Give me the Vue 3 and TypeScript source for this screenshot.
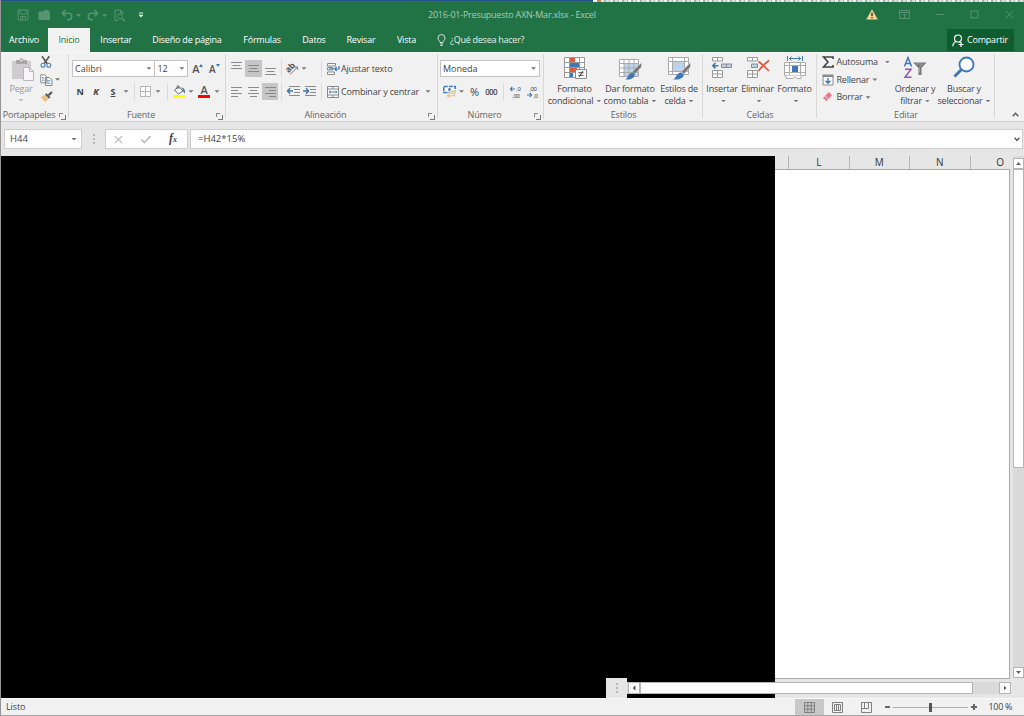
<script setup lang="ts">
interface Tab { label: string; cls: string }
const tabs: Tab[] = [
  { label: 'Archivo', cls: 'archivo' },
  { label: 'Inicio', cls: 'inicio active' },
  { label: 'Insertar', cls: 'insertar' },
  { label: 'Diseño de página', cls: 'diseno' },
  { label: 'Fórmulas', cls: 'formulas' },
  { label: 'Datos', cls: 'datos' },
  { label: 'Revisar', cls: 'revisar' },
  { label: 'Vista', cls: 'vista' },
]
const columns: string[] = ['L', 'M', 'N']
</script>

<template>
  <div class="window">
    <div class="desktop"><i class="d1"></i><i class="d2"></i></div>
    <header class="titlebar">
      <div class="quick">
        <svg class="q-save" width="12" height="12" viewBox="0 0 12 12"><path d="M1 1h10v10H1zM3 1v4h6V1M3.500 11V7.500h5V11M5.500 8v3" /></svg>
        <svg class="q-open" width="13" height="12" viewBox="0 0 13 12"><path class="solid" d="M.5 2.500h5l1-1.500h4v1.500H12V11H.5z" /></svg>
        <svg class="q-undo" width="12" height="12" viewBox="0 0 12 12"><path class="thick" d="M4.500 1 1.300 4.200l3.200 3.200M2 4.200h5.500a3.200 3.200 0 0 1 0 6.400H6" /></svg>
        <svg class="q-arr" width="5" height="3" viewBox="0 0 5 3"><path class="solid" d="M0 0h5L2.500 3z" /></svg>
        <svg class="q-redo" width="12" height="12" viewBox="0 0 12 12"><path class="thick" d="M7.500 1l3.200 3.200-3.200 3.200M10 4.200H4.500a3.200 3.200 0 0 0 0 6.400H6" /></svg>
        <svg class="q-arr" width="5" height="3" viewBox="0 0 5 3"><path class="solid" d="M0 0h5L2.500 3z" /></svg>
        <svg class="q-prev" width="12" height="13" viewBox="0 0 12 13"><path d="M4 11.500H1V1h5.500L9 3.500V5M6.500 1v3H9" /><circle cx="6" cy="7.500" r="2.500" /><path class="thick" d="M8 9.500l3 2.800" /></svg>
        <svg class="q-more" width="6" height="6" viewBox="0 0 6 6"><path d="M1 .5h4v1H1zM.5 2.800h5L3 5.400z" /></svg>
      </div>
      <div class="title">2016-01-Presupuesto AXN-Mar.xlsx - Excel</div>
      <div class="winbtns">
        <svg width="12" height="11" viewBox="0 0 12 11"><path d="M6 .3 11.800 10.500H.2z" fill="#f7cf8c" /><path d="M6 3.500v3.500M6 8v1.300" stroke="#3c4650" stroke-width="1.500" /></svg>
        <svg class="w-opt" width="11" height="9" viewBox="0 0 11 9"><path d="M.5.500h10v8H.5zM.5 2.500h10M5.500 8V4M3.800 5.500l1.700-1.700 1.700 1.700" /></svg>
        <svg class="w-min" width="9" height="9" viewBox="0 0 9 9"><path d="M1 4.500h8" /></svg>
        <svg class="w-max" width="9" height="9" viewBox="0 0 9 9"><path d="M1 1h7v7H1z" /></svg>
        <svg class="w-close" width="9" height="9" viewBox="0 0 9 9"><path d="M.7.700l7.600 7.600M8.300.700.700 8.300" /></svg>
      </div>
    </header>

    <nav class="tabs">
      <div v-for="t in tabs" :key="t.label" class="tab" :class="t.cls">{{ t.label }}</div>
      <svg class="bulb" width="9" height="12" viewBox="0 0 9 12"><path d="M3 8.500C3 7 1 6.300 1 4a3.500 3.500 0 0 1 7 0c0 2.300-2 3-2 4.500zM3 10h3M3.500 11.500h2" fill="none" stroke="#e2eee7" stroke-width=".9" /></svg>
      <div class="tell">¿Qué desea hacer?</div>
      <div class="share">
        <svg width="12" height="13" viewBox="0 0 12 13"><circle cx="6" cy="4.500" r="3.500" fill="none" stroke="#fff" stroke-width="1.200" /><path d="M.8 12.300c.2-2.600 1.600-4.300 3.600-4.800M7 7.500l1.300 1M9 8v5M6.500 10.500h5" fill="none" stroke="#fff" stroke-width="1.200" /></svg>
        <span>Compartir</span>
      </div>
    </nav>

    <section class="ribbon">
      <!-- Portapapeles -->
      <div class="group g-clip">
        <div class="body">
          <div class="paste">
            <svg width="24" height="24" viewBox="0 0 24 24"><path d="M1 4h19v18H1z" fill="#cfcccf" /><path d="M5 3h3.500a2 2 0 0 1 4 0H16v4H5z" fill="#aaa6aa" /><circle cx="10.500" cy="3.200" r="1" fill="#eee" /><path d="M12.500 10.500h6l4 4v9h-10z" fill="#f7f5f8" stroke="#bbb6bc" /><path d="M18.500 10.500v4h4" fill="none" stroke="#bbb6bc" /></svg>
            <span class="dim">Pegar</span>
            <b class="arr faint"></b>
          </div>
          <div class="clipcol">
            <svg width="12" height="12" viewBox="0 0 12 12"><path d="M2 .3l5.300 7.400M9.300.3 4 7.700" stroke="#555" stroke-width="1.600" /><circle cx="3" cy="9.300" r="2" fill="none" stroke="#4a82ba" stroke-width="1.100" /><circle cx="8.800" cy="9.300" r="2" fill="none" stroke="#4a82ba" stroke-width="1.100" /></svg>
            <div class="copy"><svg width="13" height="12" viewBox="0 0 13 12"><path d="M.8.800h4l2 2v6h-6zM5.500 3.500h4l2.500 2.500v5.500H5.500z" fill="#fff" stroke="#888" /><path d="M2 3.500h2.500M2 5h2.500M2 6.500h2.500M7 6.500h3.500M7 8h3.500M7 9.500h3.500" stroke="#6a9acb" stroke-width=".8" /></svg><b class="arr"></b></div>
            <svg width="13" height="12" viewBox="0 0 13 12"><path d="M.8 6 5 3.800l3.300 4L5 11.300z" fill="#edc181" /><path d="M5 3.500l1.500-1.200 4 4-1.500 1.500z" fill="#555" /><path d="M8.500 4.200 12 1" stroke="#555" stroke-width="2.200" /></svg>
          </div>
        </div>
        <footer><span>Portapapeles</span><i class="launch"></i></footer>
      </div>

      <!-- Fuente -->
      <div class="group g-font">
        <div class="body rows">
          <div class="row">
            <div class="combo c-font"><span>Calibri</span><b class="arr"></b></div>
            <div class="combo c-size"><span>12</span><b class="arr"></b></div>
            <div class="grow">A<svg width="4" height="3" viewBox="0 0 4 3"><path d="M0 3h4L2 0z" fill="#3f78b5" /></svg></div>
            <div class="grow shrink">A<svg width="4" height="3" viewBox="0 0 4 3"><path d="M0 0h4L2 3z" fill="#3f78b5" /></svg></div>
          </div>
          <div class="row r2">
            <div class="x w16 bold">N</div><div class="x w16 bold ital">K</div><div class="x w18 bold under">S</div><div class="x w8"><b class="arr"></b></div><div class="x w8"><i class="sep"></i></div>
            <div class="x w15"><svg width="11" height="11" viewBox="0 0 11 11"><path d="M.5.500h10v10H.5zM5.500.500v10M.5 5.500h10" fill="#fff" stroke="#b5b5b5" /></svg></div>
            <div class="x w10"><b class="arr"></b></div><div class="x w8"><i class="sep"></i></div>
            <div class="x w16"><svg width="13" height="13" viewBox="0 0 13 13"><path d="M1.500 5 6 1.500l4 4.500-4.500 3z" fill="#fff" stroke="#666" /><path d="M4 4V1.500Q5-.3 6 1.500V4" fill="none" stroke="#666" /><path d="M8.500 2.500q4 .5 3.500 6-2-1-2-3.500z" fill="#3f78b5" /><path d="M0 10h12.500v3H0z" fill="#ffff00" /></svg></div>
            <div class="x w8"><b class="arr"></b></div>
            <div class="x w18 fontcolor"><span>A</span><i></i></div>
            <div class="x w8"><b class="arr"></b></div>
          </div>
        </div>
        <footer><span>Fuente</span><i class="launch"></i></footer>
      </div>

      <!-- Alineación -->
      <div class="group g-align">
        <div class="body rows">
          <div class="row">
            <div class="x w17"><svg width="11" height="15" viewBox="0 0 11 15"><path d="M0 1.500h11M1.500 4.500h8M0 7.500h11" class="ln" /></svg></div>
            <div class="x w17 on"><svg width="11" height="15" viewBox="0 0 11 15"><path d="M0 4.500h11M1.500 7.500h8M0 10.500h11" class="ln" /></svg></div>
            <div class="x w16"><svg width="11" height="15" viewBox="0 0 11 15"><path d="M0 7.500h11M1.500 10.500h8M0 13.500h11" class="ln" /></svg></div>
            <div class="x w7"><i class="sep"></i></div>
            <div class="x w15"><svg width="13" height="12" viewBox="0 0 13 12"><text x="0" y="8" transform="rotate(-45 4 6)" font-size="8.500" font-weight="700" fill="#555">ab</text><path d="M4 11.500 11.500 4M9 4h2.700v2.700" fill="none" stroke="#777" /></svg></div>
            <div class="x w8"><b class="arr"></b></div><div class="x w10"></div><div class="x w7"><i class="sep"></i></div>
            <div class="x w16"><svg width="13" height="12" viewBox="0 0 13 12"><path d="M.5.500h8v2.500h-8zM.5 4.500h5v2.500h-5zM.5 9h7v2.500h-7z" fill="#fff" stroke="#888" /><path d="M2 5.800h5" stroke="#3f78b5" /><path d="M12 3v3H8M9.700 4 7.800 6l1.900 2" fill="none" stroke="#3f78b5" stroke-width="1.200" /></svg></div>
            <span class="lbl l-wrap">Ajustar texto</span>
          </div>
          <div class="row r2">
            <div class="x w17"><svg width="11" height="11" viewBox="0 0 11 11"><path d="M0 1.500h11M0 4.500h7M0 7.500h11M0 10.500h7" class="ln" /></svg></div>
            <div class="x w17"><svg width="11" height="11" viewBox="0 0 11 11"><path d="M0 1.500h11M2 4.500h7M0 7.500h11M2 10.500h7" class="ln" /></svg></div>
            <div class="x w16 on"><svg width="11" height="11" viewBox="0 0 11 11"><path d="M0 1.500h11M4 4.500h7M0 7.500h11M4 10.500h7" class="ln" /></svg></div>
            <div class="x w7"><i class="sep"></i></div>
            <div class="x w16"><svg width="13" height="11" viewBox="0 0 13 11"><path d="M2 .500h11M7 3.500h6M7 6.500h6M2 9.500h11" class="ln" /><path d="M0 5h6M3 2.200.5 5 3 7.800" fill="none" stroke="#3f78b5" stroke-width="1.500" /></svg></div>
            <div class="x w17"><svg width="13" height="11" viewBox="0 0 13 11"><path d="M2 .500h11M7 3.500h6M7 6.500h6M2 9.500h11" class="ln" /><path d="M0 5h6M3 2.200 5.500 5 3 7.800" fill="none" stroke="#3f78b5" stroke-width="1.500" /></svg></div>
            <div class="x w7"><i class="sep"></i></div>
            <div class="x w16"><svg width="12" height="12" viewBox="0 0 12 12"><path d="M.5.500h11v11H.5zM.5 3h11M.5 9h11M6 .500V3M6 9v2.500" fill="#fff" stroke="#888" /><path d="M2 6h8M3.500 4.700 2.200 6l1.300 1.300M8.500 4.700 9.800 6 8.500 7.300" fill="none" stroke="#3f78b5" /></svg></div>
            <span class="lbl l-merge">Combinar y centrar</span><div class="x w10"><b class="arr"></b></div>
          </div>
        </div>
        <footer><span>Alineación</span><i class="launch"></i></footer>
      </div>

      <!-- Número -->
      <div class="group g-num">
        <div class="body rows">
          <div class="row"><div class="combo c-num"><span>Moneda</span><b class="arr"></b></div></div>
          <div class="row r2">
            <div class="x w18"><svg width="13" height="13" viewBox="0 0 13 13"><path d="M.8 1.500h11.400v6H.8z" fill="#fff" stroke="#3f78b5" stroke-width="1.500" stroke-dasharray="4 1" /><circle cx="6.500" cy="4.500" r="1.500" fill="#3f78b5" /><path d="M7 5.500h5.500v6H7zM4 9h5v3.500H4z" fill="#edc181" stroke="#f1f1f1" stroke-width=".6" /><path d="M7 7.500h5M7 9.500h5" stroke="#f1f1f1" stroke-width=".7" /></svg></div>
            <div class="x w7"><b class="arr"></b></div>
            <div class="x w19 pct">%</div><div class="x w14 mil">000</div><div class="x w10"><i class="sep"></i></div>
            <div class="x w16"><svg width="12" height="12" viewBox="0 0 12 12"><text x="6" y="4.600" class="dec">,0</text><text x="2" y="11.800" class="dec">,00</text><path d="M0 3h5M2.300.800.500 3l1.800 2.200" fill="none" stroke="#3f78b5" stroke-width="1.200" /></svg></div>
            <div class="x w17"><svg width="12" height="12" viewBox="0 0 12 12"><text x="2" y="4.600" class="dec">,00</text><text x="6" y="11.800" class="dec">,0</text><path d="M0 9h5M2.700 6.800 4.500 9l-1.800 2.200" fill="none" stroke="#3f78b5" stroke-width="1.200" /></svg></div>
          </div>
        </div>
        <footer><span>Número</span><i class="launch"></i></footer>
      </div>

      <!-- Estilos -->
      <div class="group g-style">
        <div class="body bigs">
          <div class="big b-cond">
            <svg width="24" height="24" viewBox="0 0 24 24"><path d="M1.500 1.500h20v20h-20zM1.500 6.500h20M1.500 11.500h20M1.500 16.500h20M6.500 1.500v20M16.500 1.500v20" fill="#fff" stroke="#999" /><path d="M7 2h5v4H7zM7 12h7v4H7z" fill="#dc5b3c" /><path d="M7 7h9v4H7zM7 17h3v4H7z" fill="#3f78b5" /><path d="M12.500 13.500h11v9h-11z" fill="#fff" stroke="#888" /><path d="M15.500 16.700h5M15.500 19.300h5M20 15l-4 6" stroke="#444" /></svg>
            <span>Formato</span><span>condicional<b class="arr"></b></span>
          </div>
          <div class="big b-table">
            <svg width="24" height="24" viewBox="0 0 24 24"><path d="M1.500 3.500h19v17h-19z" fill="#fff" stroke="#aaa" /><path d="M6 8h14v12H6z" fill="#bdd3eb" /><path d="M1.500 7.500h19M1.500 12h19M1.500 16.500h19M6 3.500v17M11 3.500v17M16 3.500v17" stroke="#aaa" fill="none" /><path d="M14 16 20.500 9.500 23.500 6.500v4.500L17 18z" fill="#777" stroke="#f1f1f1" stroke-width=".5" /><path d="M7 23.500c3-1 3-5.500 7-7 2 0 3 1.500 2.500 3.500-1.500 3-5.500 4-9.500 3.500z" fill="#3f78b5" /></svg>
            <span>Dar formato</span><span>como tabla<b class="arr"></b></span>
          </div>
          <div class="big b-cell">
            <svg width="24" height="24" viewBox="0 0 24 24"><path d="M1.500 1.500h20v17h-20z" fill="#fff" stroke="#aaa" /><path d="M1.500 5.500h20M1.500 15.500h20M5.500 1.500v17M17.500 1.500v17" stroke="#aaa" fill="none" /><path d="M6 6h11v9H6z" fill="#bdd3eb" /><path d="M14 16 20.500 9.500 23.500 6.500v4.500L17 18z" fill="#777" stroke="#f1f1f1" stroke-width=".5" /><path d="M6 23.500c3-1 3-5.500 7-7 2 0 4 1.500 3.500 3.500-1.500 3-6.500 4-10.500 3.500z" fill="#3f78b5" /></svg>
            <span>Estilos de</span><span>celda<b class="arr"></b></span>
          </div>
        </div>
        <footer><span>Estilos</span></footer>
      </div>

      <!-- Celdas -->
      <div class="group g-cells">
        <div class="body bigs">
          <div class="big b-ins">
            <svg width="22" height="24" viewBox="0 0 22 24"><path d="M1.500 1.500h10v3.500h-10zM6.500 1.500V5M1.500 14.500h10v7h-10zM6.500 14.500v7M1.500 18h10" fill="#fff" stroke="#999" /><path d="M10.500 8h10v3.500h-10zM15.500 8v3.500" fill="#bdd3eb" stroke="#888" /><path d="M1.500 9.700h6M4.500 7 1.800 9.700l2.700 2.700" fill="none" stroke="#3f78b5" stroke-width="1.600" /></svg>
            <span>Insertar</span><span><b class="arr"></b></span>
          </div>
          <div class="big b-del">
            <svg width="24" height="24" viewBox="0 0 24 24"><path d="M1.500 1.500h10v3.500h-10zM6.500 1.500V5M1.500 14.500h10v7h-10zM6.500 14.500v7M1.500 18h10" fill="#fff" stroke="#999" /><path d="M5.500 8h6v3.500h-6z" fill="#bdd3eb" stroke="#888" /><path d="M12.500 5.500c4 3 7 6 10.500 9.500M23 4.500c-4 3-7.500 6.500-10.500 10.500" fill="none" stroke="#dc5b3c" stroke-width="1.700" /></svg>
            <span>Eliminar</span><span><b class="arr"></b></span>
          </div>
          <div class="big b-fmt">
            <svg width="24" height="24" viewBox="0 0 24 24"><path d="M4.500 0v5M19.500 0v5M6 2.500h12M8.500.500l-2 2 2 2M15.500.500l2 2-2 2" fill="none" stroke="#3f78b5" /><path d="M1.500 6.500h21v13h-21zM1.500 9.500h21M1.500 16.500h21M6.500 6.500v13M17.500 6.500v13" fill="#fff" stroke="#aaa" /><path d="M3 19.500v3h7l2-2 2 2h4v-3" fill="#fff" stroke="#aaa" /><path d="M9 10h6v6H9z" fill="#3f78b5" /></svg>
            <span>Formato</span><span><b class="arr"></b></span>
          </div>
        </div>
        <footer><span>Celdas</span></footer>
      </div>

      <!-- Editar -->
      <div class="group g-edit">
        <div class="body edits">
          <div class="elist">
            <div class="e"><svg width="12" height="12" viewBox="0 0 12 12"><path d="M11 3V1H1.500L6 6l-4.500 5H11V9" fill="none" stroke="#444" stroke-width="1.600" /></svg><span class="s-auto">Autosuma</span><b class="arr"></b></div>
            <div class="e"><svg width="12" height="12" viewBox="0 0 12 12"><path d="M1 1.500h10v9.500H1z" fill="#fff" stroke="#888" /><path d="M.5.500h11v2.500H.5z" fill="#888" /><path d="M6 4v5M3.500 6.800 6 9.200l2.500-2.400" fill="none" stroke="#3f78b5" stroke-width="1.400" /></svg><span class="s-fill">Rellenar</span><b class="arr"></b></div>
            <div class="e"><svg width="12" height="12" viewBox="0 0 12 12"><path d="M1 7 7 1l3 3.300L4.300 10z" fill="#e8798b" /><path d="M3 4.700l3.200 3.700" stroke="#f1f1f1" /></svg><span class="s-clear">Borrar</span><b class="arr"></b></div>
          </div>
          <div class="big b-sort">
            <svg width="24" height="24" viewBox="0 0 24 24"><path d="M1.500 10.500 5 1.500l3.500 9M2.700 7.500h4.600" fill="none" stroke="#3f78b5" stroke-width="1.500" /><path d="M2 13.200h6L2 21.200h6.500" fill="none" stroke="#9256b0" stroke-width="1.500" /><path d="M10 6.500h13.500L18.500 12v7h-3v-7z" fill="#777" /><path d="M12.500 8h7L16.500 11.500v5" fill="none" stroke="#aaa" stroke-width=".8" /></svg>
            <span>Ordenar y</span><span>filtrar<b class="arr"></b></span>
          </div>
          <div class="big b-find">
            <svg width="22" height="24" viewBox="0 0 22 24"><circle cx="13.500" cy="8.500" r="7" fill="#fff" stroke="#3f78b5" stroke-width="1.800" /><path d="M8.500 13.500 1.500 20.500" stroke="#3f78b5" stroke-width="3" /></svg>
            <span>Buscar y</span><span>seleccionar<b class="arr"></b></span>
          </div>
        </div>
        <footer><span>Editar</span></footer>
      </div>
      <svg class="collapse" width="7" height="5" viewBox="0 0 7 5"><path d="M.7 4.200 3.500 1.200l2.800 3" fill="none" stroke="#555" stroke-width="1.300" /></svg>
    </section>

    <section class="formula">
      <div class="namebox"><span>H44</span><b class="arr"></b></div>
      <div class="dots"><i></i><i></i><i></i></div>
      <div class="fx">
        <svg width="9" height="9" viewBox="0 0 9 9"><path d="M.8.800l7.400 7.400M8.200.800.800 8.200" fill="none" stroke="#bbb" stroke-width="1.200" /></svg>
        <svg width="10" height="9" viewBox="0 0 10 9"><path d="M.5 4.500 3.500 7.500l6-6.500" fill="none" stroke="#bbb" stroke-width="1.700" /></svg>
        <em>f<small>x</small></em>
      </div>
      <div class="finput"><span>=H42*15%</span><svg width="6" height="5" viewBox="0 0 6 5"><path d="M.6.800 3 3.500 5.400.800" fill="none" stroke="#555" stroke-width="1.300" /></svg></div>
    </section>

    <main class="work">
      <div class="blackout"></div>
      <div class="sheet">
        <div class="cols"><div class="stub"></div><div v-for="c in columns" :key="c" class="col">{{ c }}</div><div class="col last">O</div></div>
        <div class="cells"></div>
      </div>
      <div class="vscroll">
        <div class="sb up"><b></b></div><div class="vthumb"></div><div class="vtrack"></div><div class="sb down"><b></b></div>
      </div>
      <div class="hbar">
        <div class="grip"><div class="dots"><i></i><i></i><i></i></div></div>
        <div class="hscroll"><div class="hb left"><b></b></div><div class="hthumb"></div><div class="htrack"></div><div class="hb right"><b></b></div></div>
      </div>
    </main>

    <footer class="status">
      <span class="ready">Listo</span>
      <div class="view on"><svg width="11" height="11" viewBox="0 0 11 11"><path d="M.5.500h10v10H.5zM.5 3.800h10M.5 7.200h10M3.800.500v10M7.200.500v10" /></svg></div>
      <div class="view"><svg width="11" height="11" viewBox="0 0 11 11"><path d="M.5.500h10v10H.5zM2.500 2.500h6v6h-6zM4.500 2.500v6M6.500 2.500v6" /></svg></div>
      <div class="view"><svg width="11" height="11" viewBox="0 0 11 11"><path d="M.5.500h10v10H.5zM3.500.500v6M.5 6.500h7M7.500.500v6" /></svg></div>
      <i class="minus"></i>
      <div class="zoombar"><i></i></div>
      <i class="plus"></i>
      <span class="zoom">100 %</span>
    </footer>
  </div>
</template>

<style>
html, body { margin: 0; overflow: hidden; background: #e6e6e6; }
</style>

<style scoped>
* { box-sizing: border-box; }
svg { display: block; flex: none; overflow: visible; }
.window { position: relative; width: 1024px; height: 716px; display: flex; flex-direction: column; background: #e6e6e6; border-left: 1px solid #949494; border-bottom: 1px solid #a5a5a5; font-family: "Open Sans", "Noto Sans", sans-serif; font-size: 9px; font-weight: 500; line-height: 12px; letter-spacing: -.2px; color: #444; white-space: nowrap; overflow: hidden; }
.desktop { height: 2px; flex: none; background: linear-gradient(#24518a 50%, #3a667c 50%); display: flex; }
.d1 { width: 8px; margin-left: 592px; background: linear-gradient(90deg, #fff 50%, #d8825a 50%); }
.d2 { flex: 1; background: repeating-linear-gradient(90deg, #eee 0 3px, #a9b0b4 3px 5px, #ddd 5px 8px, #b9b9b9 8px 9px); }

.titlebar { height: 26px; flex: none; background: #217346; display: flex; position: relative; align-items: center; }
.quick { width: 427px; display: flex; align-items: center; }
.quick svg path, .quick svg circle { fill: none; stroke: #569373; stroke-width: 1; }
.quick svg .solid { fill: #569373; stroke: none; }
.quick svg .thick { stroke-width: 1.600; }
.quick .q-more path { fill: #e8f2ec; stroke: none; }
.q-save { margin-left: 16px; } .q-open { margin-left: 9px; } .q-undo { margin-left: 10px; } .q-arr { margin-left: 3px; }
.q-redo { margin-left: 6px; } .q-prev { margin-left: 7px; } .q-more { margin-left: 12px; }
.title { color: #a9cab8; width: 180px; padding-bottom: 1px; letter-spacing: -.22px; }
.winbtns { flex: 1; display: flex; align-items: center; padding: 0 0 2px 258px; }
.winbtns svg + svg path { fill: none; stroke: #579274; stroke-width: 1; }
.w-opt { margin-left: 21px; } .w-min { margin-left: 25px; } .w-max { margin-left: 26px; } .w-close { margin-left: 26px; }

.tabs { height: 24px; flex: none; background: #217346; display: flex; align-items: center; color: #fff; }
.tab { height: 24px; line-height: 24px; text-align: center; }
.archivo { width: 46px; margin-right: 1px; } .inicio { width: 42px; } .insertar { width: 52px; } .diseno { width: 90px; } .formulas { width: 60px; }
.datos { width: 44px; } .revisar { width: 50px; } .vista { width: 41px; }
.active { background: #f1f1f1; color: #217346; height: 24px; }
.bulb { margin-left: 10px; }
.tell { margin-left: 4px; width: 497px; color: #e2eee7; letter-spacing: -.25px; }
.share { width: 67px; height: 22px; background: #0e5c2f; display: flex; align-items: center; gap: 3px; padding-left: 5px; }

.ribbon { height: 70px; flex: none; background: #f1f1f1; border-bottom: 1px solid #d2d2d2; border-top: 1px solid #f8f8f8; display: flex; position: relative; }
.group { height: 69px; display: flex; flex-direction: column; background: linear-gradient(#d8d8d8, #d8d8d8) right 1px / 1px 64px no-repeat; }
.group .body { height: 57px; flex: none; display: flex; }
.group footer { height: 10px; display: flex; align-items: center; justify-content: center; position: relative; color: #666; letter-spacing: -.15px; }
.g-clip { width: 68px; } .g-font { width: 157px; } .g-align { width: 212px; } .g-num { width: 106px; } .g-style { width: 159px; } .g-cells { width: 114px; } .g-edit { width: 178px; }
.group.g-clip footer { padding-right: 12px; letter-spacing: -.25px; } .g-font footer, .g-align footer, .g-num footer { padding-right: 13px; }
.launch { position: absolute; right: 6px; top: 3px; width: 4px; height: 4px; border: solid #888; border-width: 1px 0 0 1px; }
.launch::after { content: ""; position: absolute; left: 1px; top: 1px; width: 4px; height: 4px; border: solid #777; border-width: 0 1px 1px 0; }
.arr { width: 5px; height: 2.500px; background: #777; clip-path: polygon(0 0, 100% 0, 50% 100%); display: inline-block; flex: none; }
.arr.faint { background: #bbb; }
.paste { width: 40px; display: flex; flex-direction: column; align-items: center; padding-top: 4px; }
.paste svg { margin-left: 3px; }
.paste .dim { color: #999; margin-top: 2px; }
.paste .arr { margin-top: 4px; }
.clipcol { display: flex; flex-direction: column; gap: 5.500px; padding-top: 3px; margin-left: -1px; }
.copy { display: flex; align-items: center; gap: 2px; }
.body.rows { flex-direction: column; padding: 7px 0 0 2px; }
.g-font .body.rows { padding-left: 3px; }
.row { display: flex; height: 17px; align-items: center; }
.row.r2 { margin-top: 6px; }
.combo { height: 17px; background: #fff; border: 1px solid #c3c3c3; display: flex; align-items: center; justify-content: space-between; padding: 0 3px 0 2px; letter-spacing: 0; }
.c-font { width: 84px; } .c-size { width: 34px; margin-left: -1px; } .c-num { width: 100px; }
.grow { display: flex; font-size: 11px; font-weight: 600; color: #555; width: 17px; margin-left: 4px; }
.grow svg { margin-top: 1px; }
.grow.shrink { font-size: 10px; margin-left: 0; }
.x { height: 17px; display: flex; align-items: center; justify-content: center; flex: none; }
.w7 { width: 7px; } .w8 { width: 8px; } .w10 { width: 10px; } .w14 { width: 14px; } .w15 { width: 15px; } .w16 { width: 16px; } .w17 { width: 17px; } .w18 { width: 18px; } .w19 { width: 19px; }
.bold { font-weight: 700; } .ital { font-style: italic; } .under { text-decoration: underline; }
.sep { width: 1px; height: 17px; background: #dadada; }
.fontcolor { flex-direction: column; }
.fontcolor span { font-size: 11px; font-weight: 600; height: 10px; line-height: 10px; color: #555; }
.fontcolor i { width: 12px; height: 3px; background: #f00; }
.on { background: #c6c6c6; }
.ln { stroke: #8a8a8a; stroke-width: 1; fill: none; }
.lbl { letter-spacing: -.17px; }
.l-wrap { width: 60px; } .l-merge { width: 82px; }
.pct { font-size: 11px; } .mil { font-size: 8px; font-weight: 600; letter-spacing: -.8px; }
.dec { font-family: "Liberation Sans", sans-serif; font-size: 6px; font-weight: 400; fill: #444; letter-spacing: -.2px; }
.bigs { justify-content: flex-start; }
.big { display: flex; flex-direction: column; align-items: center; padding-top: 3px; }
.big svg { margin-bottom: 3px; }
.big span { height: 12px; display: flex; align-items: center; }
.big span .arr { margin-left: 4px; }
.big span .arr:only-child { margin-left: 3px; }
.b-ins .arr:only-child, .b-del .arr:only-child, .b-fmt .arr:only-child { margin-left: 0; }
.b-cond { width: 61px; } .b-table { width: 52px; margin-left: -1px; } .b-cell { width: 46px; }
.b-ins { width: 38px; } .b-del { width: 33px; } .b-fmt { width: 41px; }
.edits { padding-left: 5px; }
.elist { width: 72px; padding-top: 3px; display: flex; flex-direction: column; gap: 5.700px; }
.e { display: flex; align-items: center; height: 12px; }
.e span { margin-left: 2.500px; } .e .arr { margin-left: 3px; } .e .s-auto + .arr { margin-left: 7px; }
.b-sort { width: 42px; } .b-find { width: 54px; margin-left: 1px; }
.collapse { position: absolute; right: 5px; bottom: 4px; }

.formula { height: 34px; flex: none; display: flex; padding: 7px 1px 0 3px; }
.formula > div { height: 20px; display: flex; align-items: center; }
.namebox, .fx, .finput { background: #fff; border: 1px solid #cdcdcd; font-size: 9.500px; letter-spacing: 0; }
.namebox { width: 78px; justify-content: space-between; padding: 0 4px 0 5px; }
.namebox .arr { width: 6px; height: 3px; }
.dots { display: flex; flex-direction: column; justify-content: center; gap: 2px; }
.dots i { width: 2px; height: 2px; background: #b5b5b5; }
.formula .dots { width: 23px; justify-content: center; }
.fx { width: 83px; padding-left: 8px; gap: 18px; }
.fx em { font-family: "Liberation Serif", serif; font-size: 12px; font-weight: 700; }
.fx small { font-size: 8px; }
.finput { flex: 1; margin-left: 2px; padding: 0 2px 0 7px; justify-content: space-between; }

.work { height: 542px; flex: none; display: flex; position: relative; }
.blackout { width: 774px; background: #000; }
.sheet { width: 235px; height: 523px; display: flex; flex-direction: column; }
.cols { height: 13px; display: flex; font-size: 10px; color: #333; }
.col, .stub { height: 13px; flex: none; text-align: center; line-height: 13px; border-right: 1px solid #b5b5b5; }
.stub { width: 14px; }
.col { width: 60.500px; }
.col.last { width: 39px; border: 0; padding-left: 20px; }
.cells { flex: 1; background: #fff; border: solid #ababab; border-width: 1px 1px 1px 0; }
.vscroll { margin-left: 3px; width: 11px; height: 522px; padding-top: 2px; display: flex; flex-direction: column; background: #dadada; }
.sb { height: 11px; flex: none; background: #fff; border: 1px solid #b5b5b5; display: flex; align-items: center; justify-content: center; }
.sb b { width: 5px; height: 3px; background: #666; clip-path: polygon(0 100%, 100% 100%, 50% 0); }
.sb.down b { clip-path: polygon(0 0, 100% 0, 50% 100%); }
.vthumb { height: 299px; background: #fff; border: 1px solid #b5b5b5; }
.vtrack { flex: 1; }
.hbar { position: absolute; left: 605px; bottom: 0; display: flex; height: 20px; }
.grip { width: 21px; background: #e6e6e6; display: flex; align-items: center; justify-content: center; }
.hscroll { width: 384px; height: 12px; margin-top: 4px; display: flex; background: #dadada; padding-left: 1px; }
.hb { width: 12px; height: 12px; background: #fff; border: 1px solid #b5b5b5; display: flex; align-items: center; justify-content: center; }
.hb b { width: 3px; height: 5px; background: #555; clip-path: polygon(100% 0, 100% 100%, 0 50%); }
.hb.right b { clip-path: polygon(0 0, 0 100%, 100% 50%); }
.hthumb { width: 333px; background: #fff; border: 1px solid #b5b5b5; }
.htrack { flex: 1; }

.status { height: 17px; flex: none; background: #f1f1f1; border-top: 1px solid #fafafa; display: flex; align-items: center; }
.ready { width: 794px; padding-left: 5px; letter-spacing: -.1px; }
.view { width: 28.500px; height: 17px; display: flex; align-items: center; justify-content: center; }
.view.on { background: #c8c8c8; }
.view svg path { fill: none; stroke: #808080; }
.minus { width: 5px; height: 2px; background: #666; margin-left: 4px; }
.zoombar { width: 75px; height: 9px; margin-left: 3px; display: flex; justify-content: center; background: linear-gradient(#b0b0b0, #b0b0b0) center / 100% 1px no-repeat; }
.zoombar i { width: 3px; height: 9px; background: #555; }
.plus { width: 6px; height: 6px; margin-left: 3px; background: linear-gradient(#666, #666) center / 100% 2px no-repeat, linear-gradient(#666, #666) center / 2px 100% no-repeat; }
.zoom { margin-left: 12px; letter-spacing: -.3px; }
</style>
